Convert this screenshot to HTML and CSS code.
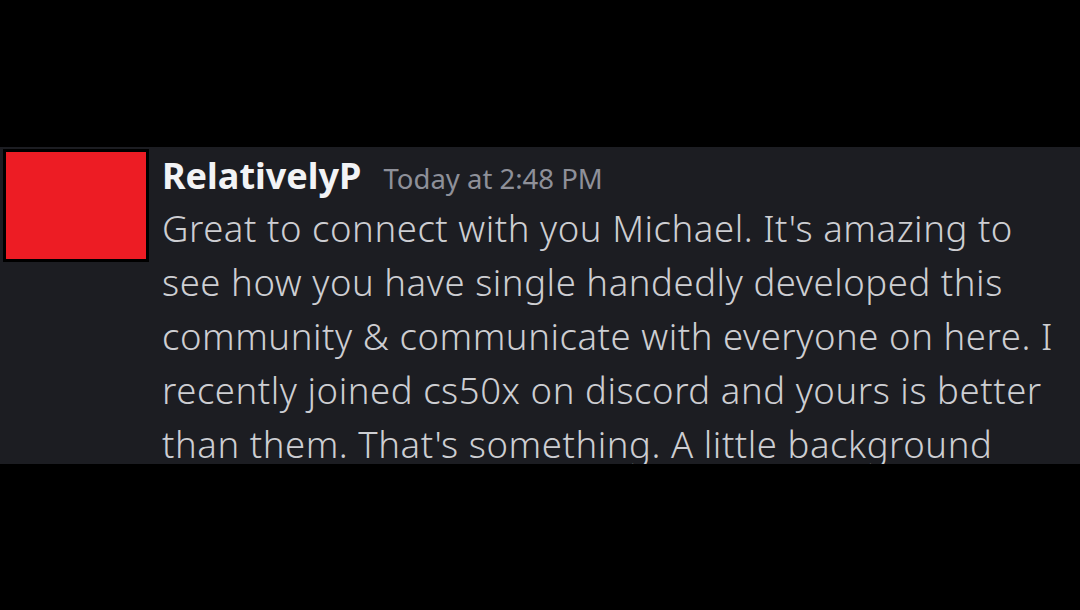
FILE: index.html
```html
<!DOCTYPE html>
<html lang="en">
<head>
    <meta charset="UTF-8">
    <meta name="viewport" content="width=device-width, initial-scale=1.0">
    <title>RelativelyP</title>
    <link rel="stylesheet" href="styles.css">
</head>
<body>

    <!-- Message -->
    <div class="message">
        <div class="avatar"></div>
        <div class="content">
            <div class="header">
                <span class="username">RelativelyP</span>
                <span class="timestamp">Today at 2:48 PM</span>
            </div>
            <p class="text">Great to connect with you Michael. It's amazing to see how you have single handedly developed this community &amp; communicate with everyone on here. I recently joined cs50x on discord and yours is better than them. That's something. A little background</p>
        </div>
    </div>

</body>
</html>
```

FILE: styles.css
```css
body {
    margin: 0;
    background-color: black;
    font-family: "Noto Sans", sans-serif;
    min-height: 100vh;
    display: flex;
    flex-direction: column;
    justify-content: center;
}

.message {
    background-color: #1c1d22;
    height: 317px;
    display: flex;
    gap: 13px;
    overflow: hidden;
}

.avatar {
    flex: none;
    width: 140px;
    height: 107px;
    margin: 2px 0 0 3px;
    background-color: #ed1c24;
    border: 3px solid black;
}

.content { padding-top: 7px; }

.header {
    display: flex;
    align-items: baseline;
    gap: 22px;
    line-height: 44px;
}

.username {
    font-size: 36px;
    font-weight: bold;
    color: #f2f3f5;
}

.timestamp {
    font-size: 27.5px;
    color: #8e9099;
}

.text {
    margin: 0;
    width: 905px;
    font-size: 36.5px;
    font-weight: 300;
    letter-spacing: 0.55px;
    line-height: 54px;
    color: #cdced2;
}
```
